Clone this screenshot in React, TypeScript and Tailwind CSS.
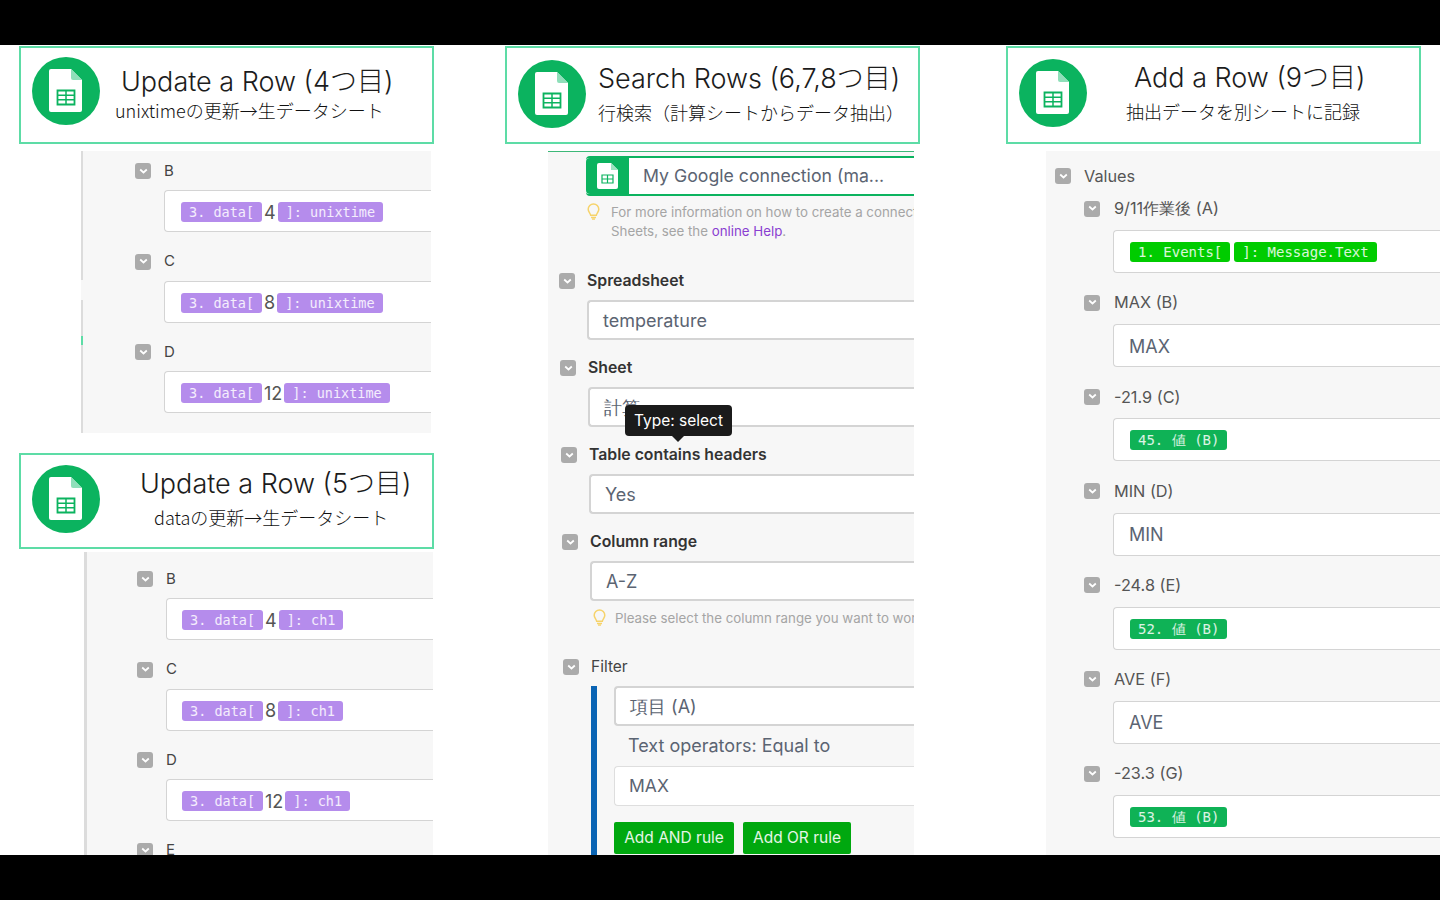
import type { ReactNode } from 'react';

const SheetIcon = ({ className }: { className: string }) => (
  <svg width="68" height="68" viewBox="0 0 68 68" className={`shrink-0 ${className}`}>
    <circle cx="34" cy="34" r="34" fill="#0bb35f" />
    <path d="M19 12h20l11 11v30a2 2 0 0 1-2 2H19a2 2 0 0 1-2-2V14a2 2 0 0 1 2-2z" fill="#fff" />
    <path d="M39 12l11 11H41a2 2 0 0 1-2-2z" fill="#8fdfba" />
    <path d="M25.500 33.500h17v14h-17z" fill="none" stroke="#0bb35f" strokeWidth="1.800" />
    <path d="M25 38.200h18M25 42.800h18M34 33v15" stroke="#0bb35f" strokeWidth="1.500" />
  </svg>
);

const SmallSheet = () => (
  <svg width="22" height="26" viewBox="0 0 22 26">
    <path d="M2 0h12l7 7v17a2 2 0 0 1-2 2H2a2 2 0 0 1-2-2V2a2 2 0 0 1 2-2z" fill="#fff" />
    <path d="M14 0l7 7h-7z" fill="#9be3c1" />
    <path d="M5 12h11v8H5zM5 16h11M10.500 12v8" fill="none" stroke="#0bb35f" strokeWidth="1.200" />
  </svg>
);

const Toggle = () => (
  <span className="flex h-4 w-4 shrink-0 items-center justify-center rounded-[3px] bg-[#ababab]">
    <svg width="9" height="7" viewBox="0 0 9 7">
      <path d="M1.200 1.500l3.300 3 3.300-3" fill="none" stroke="#fff" strokeWidth="1.700" />
    </svg>
  </span>
);

const Bulb = () => (
  <svg width="13" height="17" viewBox="0 0 13 17" className="shrink-0">
    <path d="M6.500 1a5.300 5.300 0 0 0-5.300 5.300c0 2.500 2 3.500 2.500 6h5.600c.5-2.500 2.500-3.500 2.500-6A5.300 5.300 0 0 0 6.500 1z" fill="none" stroke="#f6d36b" strokeWidth="1.500" />
    <path d="M4 14.500h5M5 16.200h3" stroke="#f6d36b" strokeWidth="1.300" />
  </svg>
);

type HeaderProps = {
  title: string;
  sub: string;
  className: string;
  iconClass: string;
  titleClass: string;
  subClass: string;
};

const Header = ({ title, sub, className, iconClass, titleClass, subClass }: HeaderProps) => (
  <div className={`flex w-[415px] shrink-0 items-start border-2 border-[#5ddca6] bg-white pl-[11px] text-[#1c1c1c] ${className}`}>
    <SheetIcon className={iconClass} />
    <div className="min-w-0 flex-1">
      <div className={`font-['Inter','Noto_Sans_CJK_JP',sans-serif] text-[27px] leading-[36px] font-light whitespace-nowrap ${titleClass}`}>{title}</div>
      <div className={`font-['Noto_Sans_CJK_JP',sans-serif] text-[18px] leading-[26px] font-light whitespace-nowrap text-[#111] ${subClass}`}>{sub}</div>
    </div>
  </div>
);

const Pill = ({ children, color, size = 'text-[13.500px]' }: { children: ReactNode; color: string; size?: string }) => (
  <span className={`rounded-[3px] px-[8px] font-['DejaVu_Sans_Mono',monospace] leading-[20px] whitespace-pre text-white/85 ${size} ${color}`}>{children}</span>
);

const LetterRow = ({ label, index, rest, pad = 'pl-[16px]' }: { label: string; index?: string; rest?: string; pad?: string }) => (
  <div className="h-[90.500px]">
    <div className="flex h-[38px] items-center gap-[13px] text-[15px] text-[#444]">
      <Toggle />
      {label}
    </div>
    {rest && (
      <div className={`ml-[29px] flex h-[42px] items-center gap-[2px] rounded-l-[4px] border-y border-l border-[#d4d4d4] bg-white pt-[2px] text-[18px] text-[#555] ${pad}`}>
        <Pill color="bg-[#b58cec]">3. data[</Pill>
        {index}
        <Pill color="bg-[#b58cec]">{rest}</Pill>
      </div>
    )}
  </div>
);

const BoldField = ({ label, value, offset }: { label: string; value: string; offset: string }) => (
  <div className={`${offset} h-[87px]`}>
    <div className="flex h-[20px] items-center gap-[12px] text-[15.800px] font-semibold text-[#333]">
      <Toggle />
      {label}
    </div>
    <div className="mt-[9px] ml-[28px] flex h-[40px] items-center rounded-l-[4px] border-y-2 border-l-2 border-[#d4d4d4] bg-white pl-[14px] text-[18px] text-[#5b6472]">
      {value}
    </div>
  </div>
);

const ValueRow = ({ label, children }: { label: string; children: ReactNode }) => (
  <div className="h-[94.200px]">
    <div className="flex h-[21px] items-center gap-[14px] text-[16.300px] text-[#555]">
      <Toggle />
      {label}
    </div>
    <div className="mt-[11px] ml-[29px] flex h-[43px] items-center gap-[4px] rounded-l-[4px] border-y border-l border-[#d4d4d4] bg-white pt-[1px] pl-[16px] text-[18px] text-[#5b6472]">
      {children}
    </div>
  </div>
);

const ValuePill = ({ text }: { text: string }) => (
  <Pill color="bg-[#0fb256]" size="text-[14px]">
    {text}
  </Pill>
);

const PlainValue = ({ text }: { text: string }) => <span className="-ml-[1px]">{text}</span>;

export default function App() {
  return (
    <div className="flex h-[900px] w-[1440px] flex-col overflow-hidden bg-black font-['Inter',sans-serif]">
      <div className="h-[45px] shrink-0" />
      <main className="flex h-[810px] shrink-0 overflow-hidden bg-white pt-[1px]">
        {/* left column */}
        <section className="w-[505px] shrink-0 pl-[19px]">
          <Header
            title="Update a Row (4つ目)"
            sub="unixtimeの更新→生データシート"
            className="h-[98px]"
            iconClass="mt-[9px]"
            titleClass="pt-[16px] pl-[21px]"
            subClass="-mt-[3px] pl-[15px]"
          />
          <div className="relative mt-[7px] ml-[62px] h-[282px] w-[350px] border-l-2 border-[#dcdcdc] bg-[#f7f7f7] pt-[1px] pl-[52px]">
            <span className="absolute top-[129px] -left-[2px] h-[20px] w-[2px] bg-[#f7f7f7]" />
            <span className="absolute top-[185px] -left-[2px] h-[9px] w-[2px] bg-[#5ddca6]" />
            <LetterRow label="B" index="4" rest="]: unixtime" />
            <LetterRow label="C" index="8" rest="]: unixtime" />
            <LetterRow label="D" index="12" rest="]: unixtime" />
          </div>
          <Header
            title="Update a Row (5つ目)"
            sub="dataの更新→生データシート"
            className="mt-[20px] h-[96px]"
            iconClass="mt-[10px]"
            titleClass="pt-[11px] pl-[40px]"
            subClass="mt-[2px] pl-[54px]"
          />
          <div className="mt-[3px] ml-[65px] h-[310px] w-[349px] overflow-hidden border-l-[3px] border-[#dcdcdc] bg-[#f7f7f7] pt-[8px] pl-[50px]">
            <LetterRow label="B" index="4" rest="]: ch1" pad="pl-[15px]" />
            <LetterRow label="C" index="8" rest="]: ch1" pad="pl-[15px]" />
            <LetterRow label="D" index="12" rest="]: ch1" pad="pl-[15px]" />
            <LetterRow label="E" />
          </div>
        </section>

        {/* middle column */}
        <section className="w-[501px] shrink-0">
          <Header
            title="Search Rows (6,7,8つ目)"
            sub="行検索（計算シートからデータ抽出）"
            className="h-[98px]"
            iconClass="mt-[12px]"
            titleClass="pt-[13px] pl-[12px]"
            subClass="mt-[2px] pl-[12px]"
          />
          <div className="relative mt-[7px] ml-[43px] h-[704px] w-[366px] overflow-hidden border-t border-[#3cb878] bg-[#f7f7f7]">
            <div className="mt-[4px] ml-[38px] flex h-[40px] items-stretch rounded-l-[4px] border-y-2 border-[#0bb35f] bg-white">
              <span className="flex w-[43px] shrink-0 items-center justify-center rounded-l-[4px] bg-[#0bb35f]">
                <SmallSheet />
              </span>
              <span className="flex items-center pl-[14px] text-[17.700px] whitespace-nowrap text-[#5b6472]">My Google connection (ma...</span>
            </div>
            <div className="mt-[7px] ml-[39px] flex gap-[11px] text-[13.300px] leading-[19px] whitespace-nowrap text-[#a5a5a5]">
              <Bulb />
              <p>
                For more information on how to create a connection to Google
                <br />
                Sheets, see the <span className="text-[#8a3fd1]">online Help</span>.
              </p>
            </div>
            <div className="mt-[30px] pl-[11px]">
              <BoldField label="Spreadsheet" value="temperature" offset="" />
              <BoldField label="Sheet" value="計算" offset="ml-[1px]" />
              <BoldField label="Table contains headers" value="Yes" offset="ml-[2px]" />
              <BoldField label="Column range" value="A-Z" offset="ml-[3px]" />
            </div>
            <div className="mt-[-10px] ml-[45px] flex gap-[9px] text-[13.300px] leading-[19px] whitespace-nowrap text-[#a5a5a5]">
              <Bulb />
              Please select the column range you want to work with
            </div>
            <div className="mt-[29px] ml-[15px] flex h-[20px] items-center gap-[12px] text-[15.500px] text-[#444]">
              <Toggle />
              Filter
            </div>
            <div className="mt-[9px] ml-[43px] h-[175px] border-l-[6px] border-[#0a64b4] pl-[17px]">
              <div className="flex h-[40px] items-center rounded-l-[4px] border-y-2 border-l-2 border-[#d4d4d4] bg-white pl-[14px] text-[18px] text-[#5b6472]">項目 (A)</div>
              <div className="flex h-[40px] items-center pb-[2px] pl-[14px] text-[18px] text-[#5b6472]">Text operators: Equal to</div>
              <div className="flex h-[40px] items-center rounded-l-[4px] border-y border-l border-[#dedede] bg-white pl-[14px] text-[17.500px] text-[#5b6472]">MAX</div>
              <div className="mt-[16px] flex gap-[9px] text-[15.500px] text-white/90">
                <span className="flex h-[32px] w-[120px] items-center justify-center rounded-[2px] bg-[#00a80f]">Add AND rule</span>
                <span className="flex h-[32px] w-[108px] items-center justify-center rounded-[2px] bg-[#00a80f]">Add OR rule</span>
              </div>
            </div>
            {/* tooltip over the Sheet field */}
            <div className="absolute top-[253px] left-[77px] rounded-[4px] bg-[#1b1b1b] px-[9px] py-[5px] text-[15.500px] leading-[21px] whitespace-nowrap text-white">
              Type: select
              <span className="absolute -bottom-[6px] left-[47px] h-0 w-0 border-x-[6px] border-t-[6px] border-x-transparent border-t-[#1b1b1b]" />
            </div>
          </div>
        </section>

        {/* right column */}
        <section className="flex-1">
          <Header
            title="Add a Row (9つ目)"
            sub="抽出データを別シートに記録"
            className="h-[98px]"
            iconClass="mt-[11px]"
            titleClass="pt-[12px] pl-[47px]"
            subClass="mt-[2px] pl-[39px]"
          />
          <div className="mt-[7px] ml-[40px] h-[704px] overflow-hidden bg-[#f7f7f7] pt-[17px] pl-[9px]">
            <div className="flex h-[16px] items-center gap-[13px] text-[16.300px] text-[#555]">
              <Toggle />
              Values
            </div>
            <div className="mt-[14px] pl-[29px]">
              <ValueRow label="9/11作業後 (A)">
                <Pill color="bg-[#00cc00]" size="text-[14px]">1. Events[</Pill>
                <Pill color="bg-[#00cc00]" size="text-[14px]">]: Message.Text</Pill>
              </ValueRow>
              <ValueRow label="MAX (B)"><PlainValue text="MAX" /></ValueRow>
              <ValueRow label="-21.9 (C)">
                <ValuePill text="45. 値 (B)" />
              </ValueRow>
              <ValueRow label="MIN (D)"><PlainValue text="MIN" /></ValueRow>
              <ValueRow label="-24.8 (E)">
                <ValuePill text="52. 値 (B)" />
              </ValueRow>
              <ValueRow label="AVE (F)"><PlainValue text="AVE" /></ValueRow>
              <ValueRow label="-23.3 (G)">
                <ValuePill text="53. 値 (B)" />
              </ValueRow>
            </div>
          </div>
        </section>
      </main>
    </div>
  );
}
